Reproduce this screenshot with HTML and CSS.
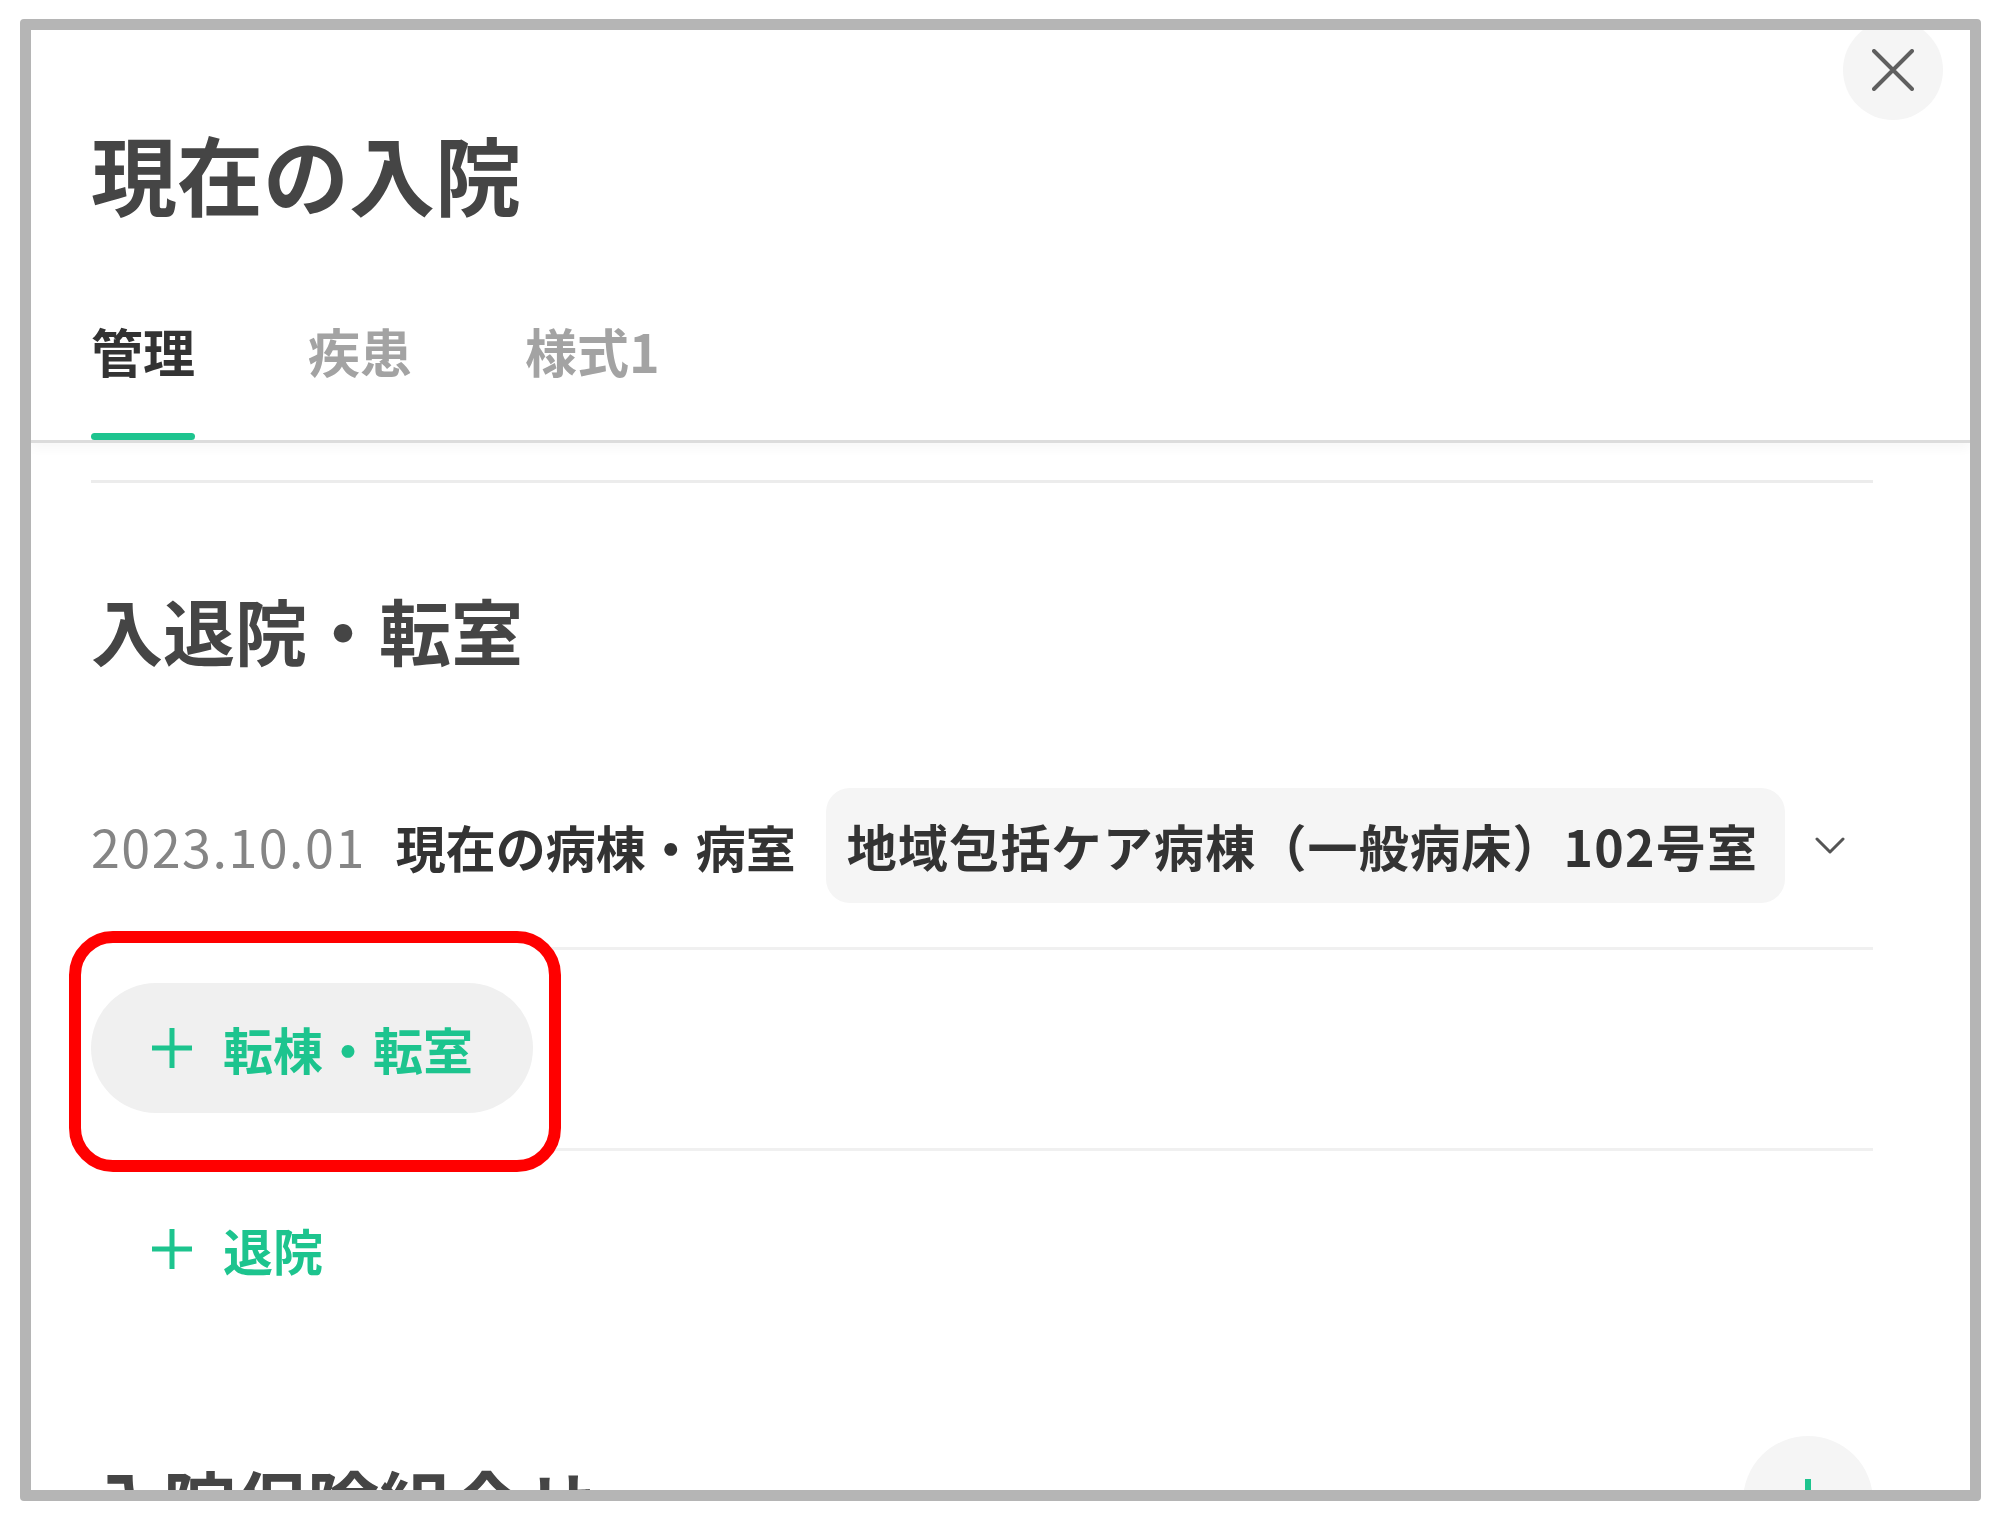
FILE: index.html
```html
<!DOCTYPE html>
<html lang="ja">
<head>
    <meta charset="UTF-8">
    <title>現在の入院</title>
    <link rel="stylesheet" href="styles.css">
</head>
<body>
    <div class="frame">
        <div class="modal">
            <button class="close-btn" aria-label="閉じる">
                <svg width="42" height="42" viewBox="0 0 42 42">
                    <path d="M2 2 L40 40 M40 2 L2 40" stroke="#5f5f5f" stroke-width="4" stroke-linecap="round" fill="none"/>
                </svg>
            </button>
            <header class="modal-header">
                <h1 class="modal-title">現在の入院</h1>
                <nav class="tabs">
                    <a class="tab active">管理</a>
                    <a class="tab">疾患</a>
                    <a class="tab">様式1</a>
                </nav>
            </header>
            <div class="modal-body">
                <div class="section-rule"></div>
                <section class="section">
                    <h2 class="section-title">入退院・転室</h2>
                    <div class="record-row">
                        <span class="record-date">2023.10.01</span>
                        <span class="record-label">現在の病棟・病室</span>
                        <div class="ward-select">地域包括ケア病棟（一般病床）102号室</div>
                        <svg class="chevron" width="30" height="18" viewBox="0 0 30 18">
                            <polyline points="2,2 15,15 28,2" stroke="#555" stroke-width="3" fill="none" stroke-linecap="round" stroke-linejoin="round"/>
                        </svg>
                    </div>
                    <div class="action-row">
                        <span class="highlight"></span>
                        <button class="add-btn filled">
                            <svg width="42" height="42" viewBox="0 0 42 42">
                                <path d="M21 1 V41 M1 21 H41" stroke="#1dc48e" stroke-width="5" fill="none"/>
                            </svg>
                            <span>転棟・転室</span>
                        </button>
                    </div>
                    <div class="action-row last">
                        <button class="add-btn">
                            <svg width="42" height="42" viewBox="0 0 42 42">
                                <path d="M21 1 V41 M1 21 H41" stroke="#1dc48e" stroke-width="5" fill="none"/>
                            </svg>
                            <span>退院</span>
                        </button>
                    </div>
                </section>
                <section class="section next">
                    <div class="section-head">
                        <h2 class="section-title">入院保険組合せ</h2>
                        <button class="circle-add" aria-label="追加">
                            <svg width="46" height="46" viewBox="0 0 46 46">
                                <path d="M23 1 V45 M1 23 H45" stroke="#1dc48e" stroke-width="6" fill="none"/>
                            </svg>
                        </button>
                    </div>
                </section>
            </div>
        </div>
    </div>
</body>
</html>
```

FILE: styles.css
```css
body {
    margin: 0;
    background-color: #fff;
    font-family: "Noto Sans CJK JP", "Noto Sans", sans-serif;
    color: #333;
}
.frame {
    margin: 19px 0 0 20px;
    width: 1939px;
    height: 1460px;
    border: 11px solid #b5b5b5;
    border-radius: 4px;
    overflow: hidden;
}
.modal {
    position: relative;
    height: 100%;
    background-color: #fff;
    overflow: hidden;
}
.close-btn {
    position: absolute;
    top: -10px;
    right: 27px;
    width: 100px;
    height: 100px;
    border: none;
    border-radius: 50%;
    background-color: #f5f5f5;
    display: flex;
    align-items: center;
    justify-content: center;
    padding: 0;
    cursor: pointer;
}
.modal-header {
    padding: 100px 0 0 60px;
    border-bottom: 3px solid #dcdcdc;
    box-shadow: 0 6px 10px rgba(0, 0, 0, 0.03);
}
.modal-title {
    margin: 0;
    font-size: 86px;
    line-height: 1;
    font-weight: 700;
    color: #454545;
}
.tabs {
    display: flex;
    gap: 113px;
    margin-top: 109px;
}
.tab {
    display: flex;
    flex-direction: column;
    font-size: 52px;
    line-height: 1;
    font-weight: 700;
    color: #a3a3a3;
    cursor: pointer;
}
.tab::after {
    content: "";
    display: block;
    height: 7px;
    margin-top: 56px;
    border-radius: 4px;
    background-color: transparent;
}
.tab.active {
    color: #333;
}
.tab.active::after {
    background-color: #1ec48f;
}
.modal-body {
    padding: 37px 97px 0 60px;
}
.section-rule {
    border-top: 3px solid #ececec;
}
.section {
    padding-top: 110px;
}
.section.next {
    padding-top: 89px;
}
.section-title {
    margin: 0;
    font-size: 72px;
    line-height: 1;
    font-weight: 700;
    color: #454545;
}
.record-row {
    display: flex;
    align-items: center;
    gap: 30px;
    margin-top: 123px;
    padding-bottom: 44px;
    border-bottom: 3px solid #f0f0f0;
}
.record-date {
    font-size: 52px;
    line-height: 1;
    letter-spacing: 1.5px;
    color: #858585;
}
.record-label {
    font-size: 50px;
    line-height: 1;
    font-weight: 700;
}
.ward-select {
    padding: 32px 27px 33px 21px;
    font-size: 50px;
    line-height: 1;
    letter-spacing: 1.2px;
    font-weight: 700;
    background-color: #f5f5f5;
    border-radius: 24px;
}
.chevron {
    flex: none;
}
.action-row {
    position: relative;
    padding: 33px 0 35px;
    border-bottom: 3px solid #f0f0f0;
}
.action-row.last {
    padding-bottom: 33px;
    border-bottom: none;
}
.highlight {
    position: absolute;
    left: -22px;
    top: -19px;
    width: 492px;
    height: 241px;
    box-sizing: border-box;
    border: 12px solid #ff0000;
    border-radius: 44px;
    background-color: #fff;
    z-index: 1;
}
.add-btn {
    position: relative;
    z-index: 2;
    display: inline-flex;
    align-items: center;
    gap: 30px;
    height: 130px;
    padding: 0 60px;
    border: none;
    border-radius: 65px;
    background: transparent;
    font-family: inherit;
    font-size: 50px;
    line-height: 1;
    font-weight: 700;
    color: #1dc48e;
    cursor: pointer;
}
.add-btn.filled {
    background-color: #f0f0f0;
}
.section-head {
    display: flex;
    align-items: center;
    justify-content: space-between;
}
.circle-add {
    width: 130px;
    height: 130px;
    border: none;
    border-radius: 50%;
    background-color: #f5f5f5;
    display: flex;
    align-items: center;
    justify-content: center;
    padding: 0;
}
```
